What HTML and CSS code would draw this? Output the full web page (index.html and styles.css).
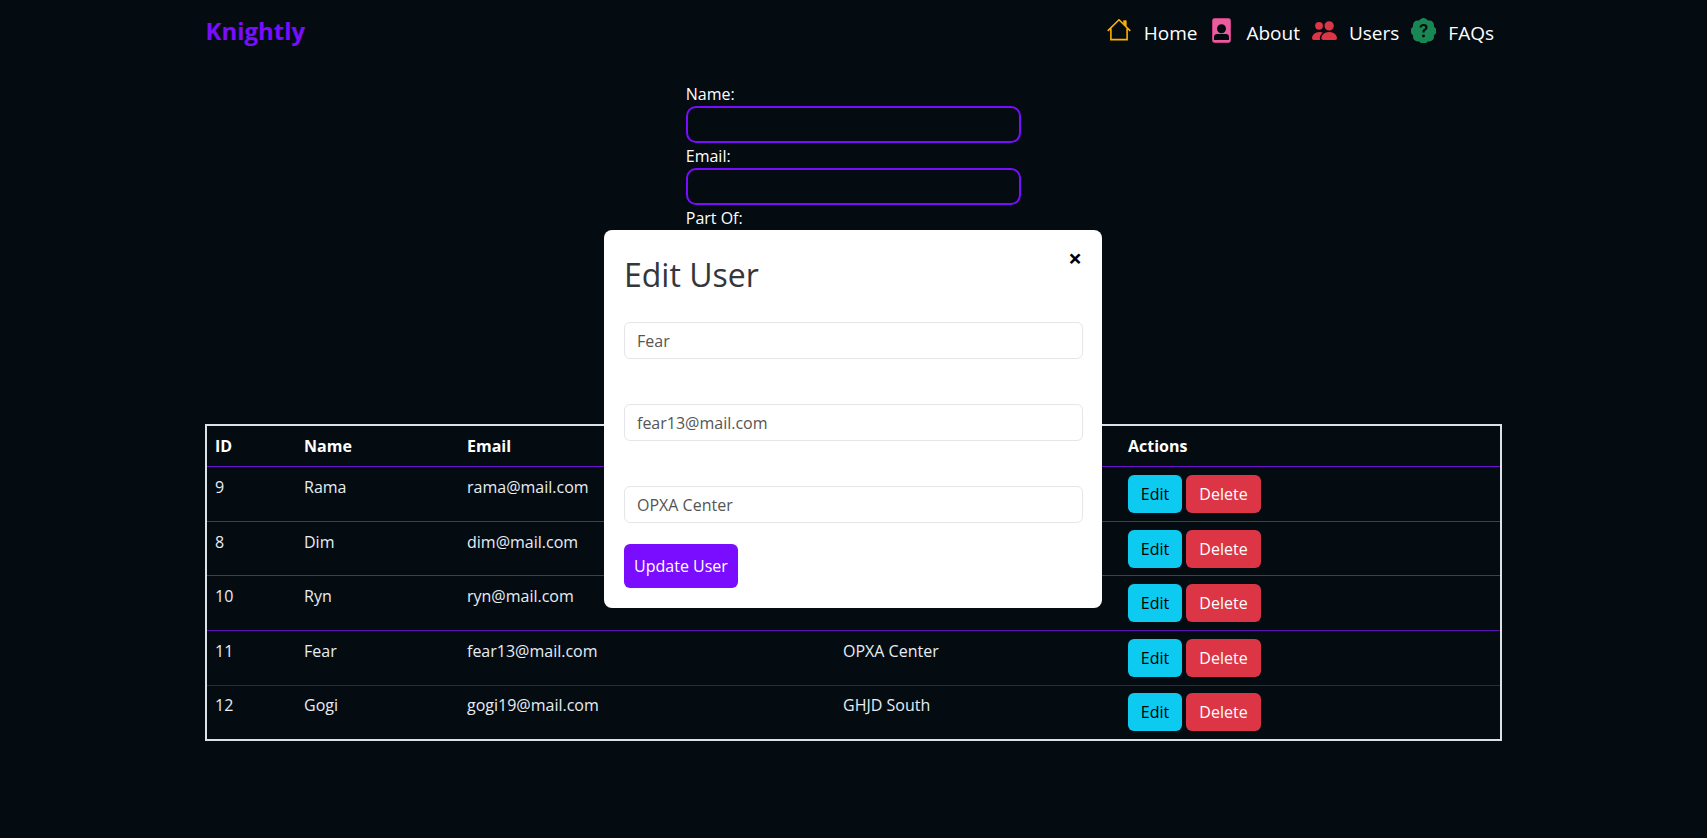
FILE: index.html
```html
<!DOCTYPE html>
<html lang="en">
<head>
<meta charset="utf-8">
<title>Knightly</title>
<link rel="stylesheet" href="styles.css">
</head>
<body>
<div class="page">
  <nav class="nav">
    <a class="brand">Knightly</a>
    <ul class="links">
      <li class="link">
        <svg class="icon home" viewBox="0 0 16 16" fill="none" stroke="currentColor" stroke-width="1.05"><path d="M.5 8.6 8 1.200l7.500 7.400M2.600 7v7.400h10.800V7"/><path d="M11.100 1.800h1.700v3.600l-1.700-1.700z" fill="currentColor" stroke-width=".5"/></svg>
        <span>Home</span>
      </li>
      <li class="link">
        <svg class="icon about" viewBox="0 0 19 25"><rect x=".5" y=".5" width="18" height="24" rx="2" fill="#e85d9e" stroke="#c43f80"/><circle cx="9.500" cy="10.700" r="4.500" fill="#03090f"/><path d="M2 22v-3.200c0-1.600 1.300-2.800 2.800-2.800h9.400c1.500 0 2.800 1.200 2.800 2.800V22z" fill="#03090f"/></svg>
        <span>About</span>
      </li>
      <li class="link">
        <svg class="icon users" viewBox="0 0 16 16" fill="currentColor"><path d="M7 14s-1 0-1-1 1-4 5-4 5 3 5 4-1 1-1 1H7zm4-6a3 3 0 1 0 0-6 3 3 0 0 0 0 6z"/><path d="M5.216 14A2.238 2.238 0 0 1 5 13c0-1.355.68-2.750 1.936-3.720A6.325 6.325 0 0 0 5 9c-4 0-5 3-5 4s1 1 1 1h4.216z"/><circle cx="4.500" cy="5" r="2.500"/></svg>
        <span>Users</span>
      </li>
      <li class="link">
        <svg class="icon faq" viewBox="0 0 16 16" fill="currentColor"><path fill-rule="evenodd" d="M5.930.87a2.890 2.890 0 0 1 4.140 0l.7.72 1-.01a2.890 2.890 0 0 1 2.930 2.930l-.01 1 .72.7a2.890 2.890 0 0 1 0 4.140l-.72.7.01 1a2.890 2.890 0 0 1-2.930 2.930l-1-.01-.7.72a2.890 2.890 0 0 1-4.140 0l-.7-.72-1 .01a2.890 2.890 0 0 1-2.930-2.930l.01-1-.72-.7a2.890 2.890 0 0 1 0-4.140l.72-.7-.01-1A2.890 2.890 0 0 1 4.230 1.580l1 .01zM8 3.900c-1.500 0-2.500.9-2.600 2.200h1.400c.1-.6.500-1 1.200-1 .6 0 1.100.4 1.100.9 0 .5-.2.700-.8 1.100-.7.500-1 1-1 1.800v.4h1.400v-.3c0-.6.200-.8.800-1.200.7-.5 1.100-1.100 1.100-1.900 0-1.200-1-2-2.600-2zM8 10.500a.95.95 0 1 0 0 1.900.95.95 0 0 0 0-1.900z"/></svg>
        <span>FAQs</span>
      </li>
    </ul>
  </nav>

  <form class="add-form">
    <label class="field-label">Name:</label>
    <input class="dark-input" type="text">
    <label class="field-label">Email:</label>
    <input class="dark-input" type="text">
    <label class="field-label">Part Of:</label>
    <input class="dark-input" type="text">
  </form>

  <table class="users-table">
    <colgroup>
      <col class="c-id"><col class="c-name"><col class="c-email"><col class="c-part"><col>
    </colgroup>
    <thead>
      <tr><th>ID</th><th>Name</th><th>Email</th><th>Part Of</th><th>Actions</th></tr>
    </thead>
    <tbody>
      <tr><td>9</td><td>Rama</td><td>rama@mail.com</td><td>KLMN East</td><td><div class="actions"><button class="btn edit">Edit</button><button class="btn del">Delete</button></div></td></tr>
      <tr><td>8</td><td>Dim</td><td>dim@mail.com</td><td>KLMN West</td><td><div class="actions"><button class="btn edit">Edit</button><button class="btn del">Delete</button></div></td></tr>
      <tr><td>10</td><td>Ryn</td><td>ryn@mail.com</td><td>OPXA North</td><td><div class="actions"><button class="btn edit">Edit</button><button class="btn del">Delete</button></div></td></tr>
      <tr><td>11</td><td>Fear</td><td>fear13@mail.com</td><td>OPXA Center</td><td><div class="actions"><button class="btn edit">Edit</button><button class="btn del">Delete</button></div></td></tr>
      <tr><td>12</td><td>Gogi</td><td>gogi19@mail.com</td><td>GHJD South</td><td><div class="actions"><button class="btn edit">Edit</button><button class="btn del">Delete</button></div></td></tr>
    </tbody>
  </table>
</div>

<div class="modal">
  <span class="close">×</span>
  <h2 class="modal-title">Edit User</h2>
  <input class="light-input" type="text" value="Fear">
  <input class="light-input" type="text" value="fear13@mail.com">
  <input class="light-input" type="text" value="OPXA Center">
  <button class="update">Update User</button>
</div>
</body>
</html>
```

FILE: styles.css
```css
* { box-sizing: border-box; }
html, body { height: 100%; }
body {
  margin: 0;
  background: #040c12;
  color: #fff;
  font-family: "Open Sans", sans-serif;
  font-size: 16px;
  line-height: 24px;
  overflow: hidden;
}
.page { width: 1297px; margin: 0 auto; }
.nav { display: flex; justify-content: space-between; align-items: center; height: 64px; padding: 0 8px 0 .5px; }
.brand { color: #7a0cff; font-size: 24px; font-weight: 700; margin-top: -2px; }
.links { display: flex; list-style: none; margin: 0; padding: 0; gap: 12px; }
.link { display: flex; align-items: center; gap: 12px; font-size: 19px; height: 30px; padding-top: 1px; }
.icon { display: block; margin-top: -5px; flex: none; }
.home { width: 24px; height: 24px; color: #ffb300; margin-right: 1px; }
.about { width: 19px; height: 25px; margin-left: 3px; margin-right: 3px; }
.users { width: 25px; height: 25px; color: #dc3545; }
.faq { width: 25px; height: 25px; color: #198754; }
.add-form { display: flex; flex-direction: column; width: 335.5px; margin: 17px auto 0; height: 343px; }
.field-label { height: 25px; font-size: 16px; line-height: 24px; padding-top: 1px; }
.dark-input { width: 100%; height: 37px; background: transparent; border: 2px solid #7a0cff; border-radius: 10px; outline: none; flex: none; }
.users-table { width: 1297px; border: 2px solid #dee2e6; border-collapse: separate; border-spacing: 0; table-layout: fixed; }
.c-id { width: 89px; }
.c-name { width: 163px; }
.c-email { width: 376px; }
.c-part { width: 285px; }
.users-table th, .users-table td { padding: 8px; text-align: left; vertical-align: top; }
.users-table th { font-weight: 700; color: #fff; height: 41px; border-bottom: 1px solid #6a12d0; }
.users-table td { color: #e8edf2; padding-bottom: 7px; height: 55px; border-bottom: 1px solid #6a12d0; }
.users-table tbody tr:nth-child(2) td { height: 54px; }
.users-table tbody tr:nth-child(3) td { border-bottom-color: #5a10b4; }
.users-table tbody tr:nth-child(4) td { border-bottom-color: #450d8f; }
.users-table tbody tr:last-child td { border-bottom: 0; height: 53px; padding-top: 7px; padding-bottom: 0; }
.actions { display: flex; gap: 4px; }
.btn { font: inherit; height: 38px; padding: 0; border: 1px solid transparent; border-radius: 6px; }
.edit { width: 54px; background: #0dcaf0; color: #000; }
.del { width: 75px; background: #dc3545; color: #fff; }
.modal { position: absolute; left: 604px; top: 230px; width: 498px; height: 378px; background: #fff; border-radius: 8px; padding: 20px; color: #333; display: flex; flex-direction: column; align-items: flex-start; }
.close { position: absolute; right: 20px; top: 14px; font-size: 24px; font-weight: 700; color: #000; line-height: 28px; }
.modal-title { margin: 0; height: 73px; padding-top: 3px; font-size: 32px; font-weight: 400; line-height: 44px; color: #33373c; }
.light-input { width: 459px; height: 37px; border: 1px solid #e6e6ea; border-radius: 6px; padding: 0 12px; font: inherit; color: #555; outline: none; flex: none; margin-bottom: 45px; }
.light-input:nth-of-type(3) { margin-bottom: 21px; }
.update { height: 44px; width: 114px; padding: 0; background: #7a0cff; color: #fff; border: 0; border-radius: 6px; font: inherit; }
```
